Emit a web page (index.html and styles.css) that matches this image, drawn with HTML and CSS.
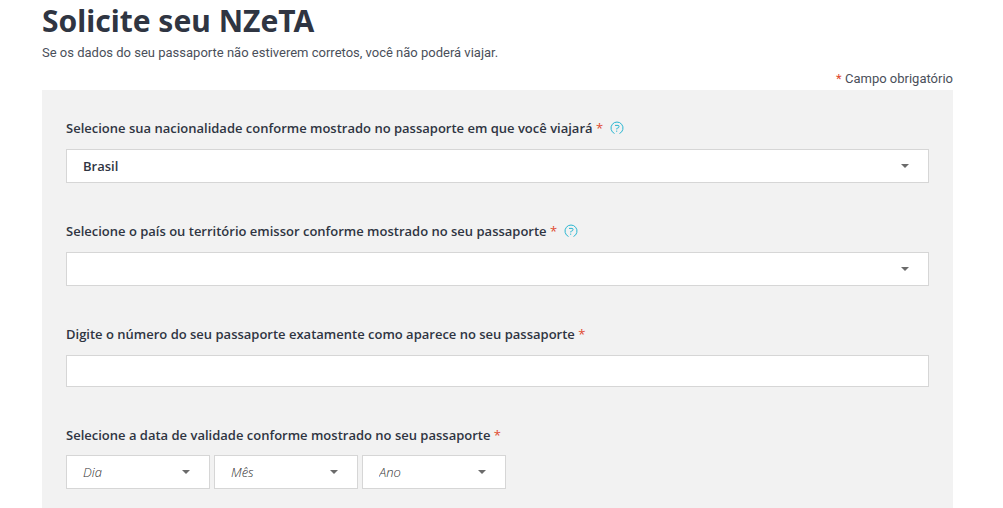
FILE: index.html
```html
<!DOCTYPE html>
<html lang="pt-BR">
<head>
<meta charset="utf-8">
<title>Solicite seu NZeTA</title>
<link rel="stylesheet" href="styles.css">
</head>
<body>
<main class="page">
  <h1 class="title">Solicite seu NZeTA</h1>
  <p class="intro">Se os dados do seu passaporte não estiverem corretos, você não poderá viajar.</p>
  <p class="required-note"><span class="star">*</span> Campo obrigatório</p>
  <form class="panel">
    <div class="field">
      <div class="label-row">
        <label for="nationality">Selecione sua nacionalidade conforme mostrado no passaporte em que você viajará <span class="star">*</span></label>
        <button class="help" type="button" aria-label="Ajuda"><svg viewBox="0 0 14 14" width="14" height="14"><path d="M4.5 12.5A6 6 0 1 1 9.5 12.5"/><path d="M5 4.4h3q1.2 0 1 1.3T7.5 7.2 6.8 8.4M6.7 9.6v1.2"/></svg></button>
      </div>
      <div class="select-box"><select id="nationality"><option>Brasil</option></select></div>
    </div>
    <div class="field">
      <div class="label-row">
        <label for="issuer">Selecione o país ou território emissor conforme mostrado no seu passaporte <span class="star">*</span></label>
        <button class="help" type="button" aria-label="Ajuda"><svg viewBox="0 0 14 14" width="14" height="14"><path d="M4.5 12.5A6 6 0 1 1 9.5 12.5"/><path d="M5 4.4h3q1.2 0 1 1.3T7.5 7.2 6.8 8.4M6.7 9.6v1.2"/></svg></button>
      </div>
      <div class="select-box"><select id="issuer"><option></option></select></div>
    </div>
    <div class="field">
      <div class="label-row">
        <label for="number">Digite o número do seu passaporte exatamente como aparece no seu passaporte <span class="star">*</span></label>
      </div>
      <input id="number" class="text-box" type="text">
    </div>
    <div class="field">
      <div class="label-row date-label">
        <label for="day">Selecione a data de validade conforme mostrado no seu passaporte <span class="star">*</span></label>
      </div>
      <div class="date-row">
        <div class="select-box date"><select id="day"><option>Dia</option></select></div>
        <div class="select-box date"><select aria-label="Mês"><option>Mês</option></select></div>
        <div class="select-box date"><select aria-label="Ano"><option>Ano</option></select></div>
      </div>
    </div>
  </form>
</main>
</body>
</html>
```
FILE: styles.css
```css
* { box-sizing: border-box; }
body {
  margin: 0;
  background: #fff;
  color: #2f3542;
  font: 13px/20px "Open Sans", "Noto Sans", sans-serif;
}
.page { padding: 1px 50px 0 42px; }
.title { margin: 0; font-family: "Noto Sans", sans-serif; font-size: 30px; line-height: 40px; font-weight: 700; }
.intro, .required-note { color: #4a4f5a; font-family: Roboto, sans-serif; }
.intro { margin: 2px 0 0; }
.required-note { margin: 6px 0 1px; text-align: right; }
.star { color: #e04a2f; font-weight: 400; }
.panel {
  display: flex;
  flex-direction: column;
  gap: 38px;
  padding: 28px 24px 20px;
  background: #f2f2f2;
}
.label-row { display: flex; align-items: center; gap: 7px; height: 20px; margin-bottom: 11px; font-weight: 600; }
.date-label { margin-bottom: 10px; }
.help { display: flex; padding: 0; border: 0; background: none; }
.help svg { fill: none; stroke: #29b6d1; stroke-width: 1; }
.select-box { position: relative; }
.select-box::after {
  content: "";
  position: absolute;
  right: 20px;
  top: 15px;
  border: 4px solid transparent;
  border-top-color: #6b6b6b;
  border-bottom: 0;
  pointer-events: none;
}
.select-box select, .text-box {
  display: block;
  width: 100%;
  height: 34px;
  padding: 0 16px;
  border: 1px solid #d6d6d6;
  border-radius: 0;
  background: #fff;
  color: #2f3542;
  font: inherit;
  font-weight: 600;
  appearance: none;
}
.text-box { height: 32px; }
.date-row { display: flex; gap: 4px; }
.date { width: 144px; }
.date select { color: #333; font-weight: 300; font-style: italic; }
```
